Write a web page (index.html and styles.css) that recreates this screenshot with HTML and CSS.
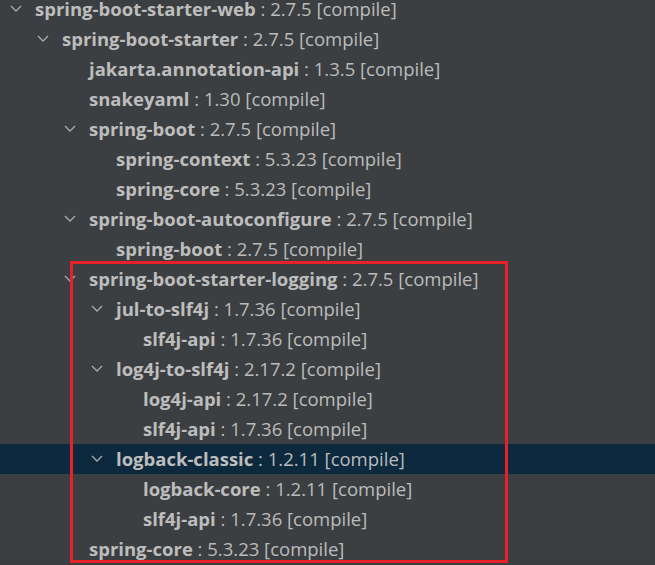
FILE: index.html
```html
<!DOCTYPE html>
<html>
<head>
<meta charset="utf-8">
<link rel="stylesheet" href="styles.css">
</head>
<body>
<div class="tree">
  <div class="row d0"><span class="arrow"><svg width="12" height="7" viewBox="0 0 12 7"><path d="M1 1 L6 6 L11 1" /></svg></span><span class="name">spring-boot-starter-web</span><span class="ver"> : 2.7.5 [compile]</span></div>
  <div class="row d1"><span class="arrow"><svg width="12" height="7" viewBox="0 0 12 7"><path d="M1 1 L6 6 L11 1" /></svg></span><span class="name">spring-boot-starter</span><span class="ver"> : 2.7.5 [compile]</span></div>
  <div class="row d2"><span class="arrow"></span><span class="name">jakarta.annotation-api</span><span class="ver"> : 1.3.5 [compile]</span></div>
  <div class="row d2"><span class="arrow"></span><span class="name">snakeyaml</span><span class="ver"> : 1.30 [compile]</span></div>
  <div class="row d2"><span class="arrow"><svg width="12" height="7" viewBox="0 0 12 7"><path d="M1 1 L6 6 L11 1" /></svg></span><span class="name">spring-boot</span><span class="ver"> : 2.7.5 [compile]</span></div>
  <div class="row d3"><span class="arrow"></span><span class="name">spring-context</span><span class="ver"> : 5.3.23 [compile]</span></div>
  <div class="row d3"><span class="arrow"></span><span class="name">spring-core</span><span class="ver"> : 5.3.23 [compile]</span></div>
  <div class="row d2"><span class="arrow"><svg width="12" height="7" viewBox="0 0 12 7"><path d="M1 1 L6 6 L11 1" /></svg></span><span class="name">spring-boot-autoconfigure</span><span class="ver"> : 2.7.5 [compile]</span></div>
  <div class="row d3"><span class="arrow"></span><span class="name">spring-boot</span><span class="ver"> : 2.7.5 [compile]</span></div>
  <div class="row d2"><span class="arrow"><svg width="12" height="7" viewBox="0 0 12 7"><path d="M1 1 L6 6 L11 1" /></svg></span><span class="name">spring-boot-starter-logging</span><span class="ver"> : 2.7.5 [compile]</span></div>
  <div class="row d3"><span class="arrow"><svg width="12" height="7" viewBox="0 0 12 7"><path d="M1 1 L6 6 L11 1" /></svg></span><span class="name">jul-to-slf4j</span><span class="ver"> : 1.7.36 [compile]</span></div>
  <div class="row d4"><span class="arrow"></span><span class="name">slf4j-api</span><span class="ver"> : 1.7.36 [compile]</span></div>
  <div class="row d3"><span class="arrow"><svg width="12" height="7" viewBox="0 0 12 7"><path d="M1 1 L6 6 L11 1" /></svg></span><span class="name">log4j-to-slf4j</span><span class="ver"> : 2.17.2 [compile]</span></div>
  <div class="row d4"><span class="arrow"></span><span class="name">log4j-api</span><span class="ver"> : 2.17.2 [compile]</span></div>
  <div class="row d4"><span class="arrow"></span><span class="name">slf4j-api</span><span class="ver"> : 1.7.36 [compile]</span></div>
  <div class="row d3 selected"><span class="arrow"><svg width="12" height="7" viewBox="0 0 12 7"><path d="M1 1 L6 6 L11 1" /></svg></span><span class="name">logback-classic</span><span class="ver"> : 1.2.11 [compile]</span></div>
  <div class="row d4"><span class="arrow"></span><span class="name">logback-core</span><span class="ver"> : 1.2.11 [compile]</span></div>
  <div class="row d4"><span class="arrow"></span><span class="name">slf4j-api</span><span class="ver"> : 1.7.36 [compile]</span></div>
  <div class="row d2"><span class="arrow"></span><span class="name">spring-core</span><span class="ver"> : 5.3.23 [compile]</span></div>
  <div class="highlight"></div>
</div>
</body>
</html>
```
FILE: styles.css
```css
html, body {
  margin: 0;
  padding: 0;
  background: #3c3f41;
  width: 655px;
  height: 565px;
  overflow: hidden;
}
.tree {
  position: relative;
  margin-top: -6px;
  display: flex;
  flex-direction: column;
  font-family: "Open Sans", "Noto Sans", sans-serif;
  font-size: 18.5px;
  color: #bbbbbb;
}
.row {
  height: 30px;
  box-sizing: border-box;
  padding-bottom: 2px;
  display: flex;
  align-items: center;
  white-space: nowrap;
}
.row.selected {
  background: #0d293e;
}
.d0 { padding-left: 10px; }
.d1 { padding-left: 37px; }
.d2 { padding-left: 64px; }
.d3 { padding-left: 91px; }
.d4 { padding-left: 118px; }
.arrow {
  width: 25px;
  flex: none;
  display: flex;
  align-items: center;
}
.arrow svg {
  display: block;
}
.arrow path {
  fill: none;
  stroke: #a9adb0;
  stroke-width: 1.3;
}
.name {
  font-weight: 700;
  color: #bdbdbd;
}
.ver {
  white-space: pre;
  color: #bbbbbb;
}
.highlight {
  position: absolute;
  left: 70px;
  top: 267px;
  width: 432px;
  height: 296px;
  border: 3.5px solid #e8202a;
}
```
